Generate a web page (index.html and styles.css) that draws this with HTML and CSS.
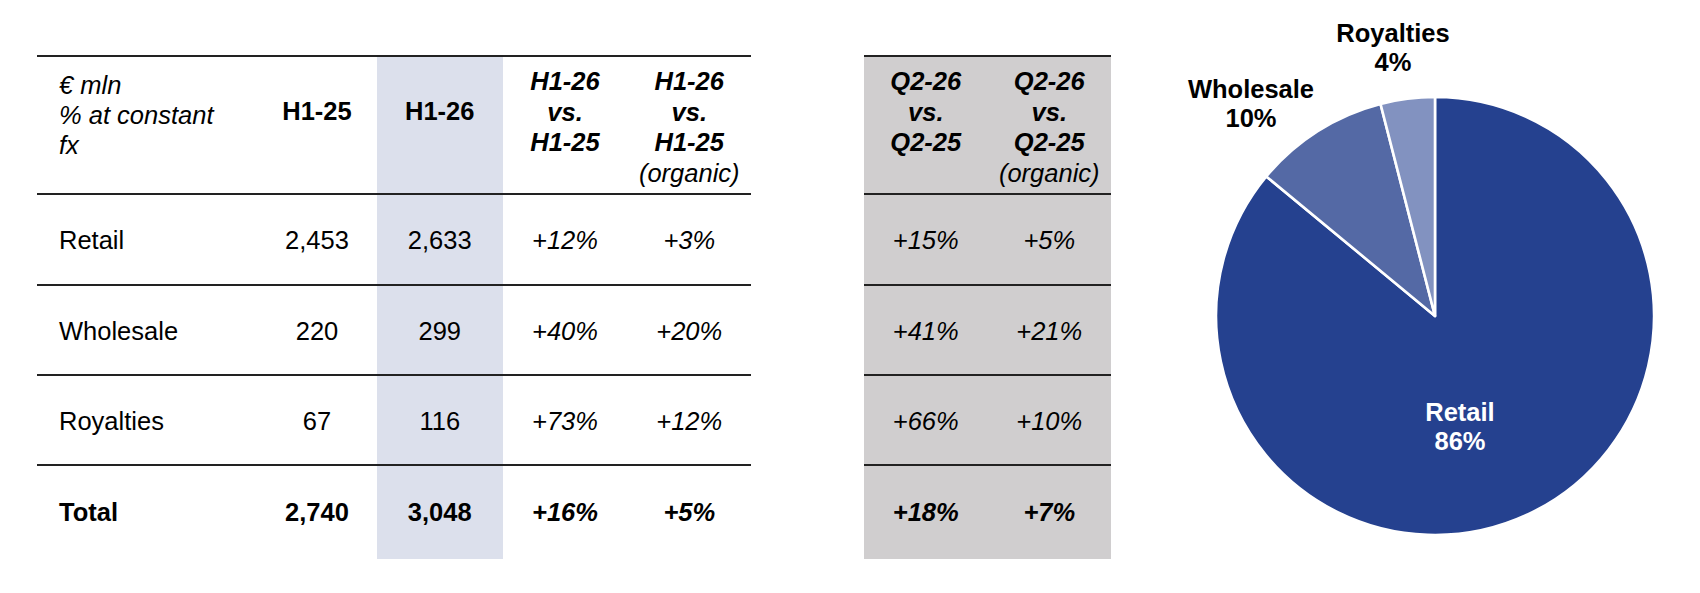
FILE: index.html
```html
<!DOCTYPE html>
<html lang="en">
<head>
<meta charset="utf-8">
<title>Revenue by channel</title>
<link rel="stylesheet" href="styles.css">
</head>
<body>
<div class="page">
  <div class="grid grid-main">
    <div class="cell hd hd-label">€ mln<br>% at constant<br>fx</div>
    <div class="cell hd hd-single">H1-25</div>
    <div class="cell hd hd-single shade">H1-26</div>
    <div class="cell hd hd-multi"><span class="bi">H1-26<br>vs.<br>H1-25</span></div>
    <div class="cell hd hd-multi"><span class="bi">H1-26<br>vs.<br>H1-25</span><br><span class="it">(organic)</span></div>

    <div class="cell row label">Retail</div>
    <div class="cell row num">2,453</div>
    <div class="cell row num shade">2,633</div>
    <div class="cell row num it">+12%</div>
    <div class="cell row num it">+3%</div>

    <div class="cell row label">Wholesale</div>
    <div class="cell row num">220</div>
    <div class="cell row num shade">299</div>
    <div class="cell row num it">+40%</div>
    <div class="cell row num it">+20%</div>

    <div class="cell row label">Royalties</div>
    <div class="cell row num">67</div>
    <div class="cell row num shade">116</div>
    <div class="cell row num it">+73%</div>
    <div class="cell row num it">+12%</div>

    <div class="cell total label">Total</div>
    <div class="cell total num">2,740</div>
    <div class="cell total num shade">3,048</div>
    <div class="cell total num it">+16%</div>
    <div class="cell total num it">+5%</div>
  </div>

  <div class="grid grid-q">
    <div class="cell hd hd-multi"><span class="bi">Q2-26<br>vs.<br>Q2-25</span></div>
    <div class="cell hd hd-multi"><span class="bi">Q2-26<br>vs.<br>Q2-25</span><br><span class="it">(organic)</span></div>

    <div class="cell row num it">+15%</div>
    <div class="cell row num it">+5%</div>

    <div class="cell row num it">+41%</div>
    <div class="cell row num it">+21%</div>

    <div class="cell row num it">+66%</div>
    <div class="cell row num it">+10%</div>

    <div class="cell total num it">+18%</div>
    <div class="cell total num it">+7%</div>
  </div>

  <div class="chart">
    <svg class="pie" width="438" height="438" viewBox="0 0 438 438" aria-hidden="true">
      <path class="sl-retail" d="M219,219 L219,0 A219,219 0 1 1 50.3,79.4 Z"/>
      <path class="sl-wholesale" d="M219,219 L50.3,79.4 A219,219 0 0 1 164.5,6.9 Z"/>
      <path class="sl-royalties" d="M219,219 L164.5,6.9 A219,219 0 0 1 219,0 Z"/>
    </svg>
    <div class="plabel pl-royalties">Royalties<br>4%</div>
    <div class="plabel pl-wholesale">Wholesale<br>10%</div>
    <div class="plabel pl-retail">Retail<br>86%</div>
  </div>
</div>
</body>
</html>
```

FILE: styles.css
```css
html, body {
  margin: 0;
  padding: 0;
  background: #ffffff;
}

body {
  width: 1700px;
  height: 593px;
  overflow: hidden;
  font-family: "Liberation Sans", Arial, sans-serif;
  font-size: 25.5px;
  color: #000000;
}

.page {
  display: flex;
  align-items: flex-start;
  padding-left: 37px;
}

.grid {
  display: grid;
  margin-top: 55px;
  grid-template-rows: 138px 91px 90px 90px 95px;
}

.grid-main {
  width: 714px;
  grid-template-columns: 220px 120px 125.5px 125px 123.5px;
}

.grid-q {
  width: 247px;
  margin-left: 113px;
  grid-template-columns: 123.5px 123.5px;
  background: #d0cecf;
}

.cell {
  box-sizing: border-box;
  border-top: 2px solid #222222;
  display: flex;
  justify-content: center;
  text-align: center;
}

.shade {
  background: #dce0ec;
}

/* header cells: plain block flow so the line breaks stack */
.hd {
  display: block;
  line-height: 30.7px;
  white-space: nowrap;
}

.hd-label {
  text-align: left;
  font-style: italic;
  line-height: 30px;
  padding-top: 13px;
  padding-left: 22px;
}

.hd-single {
  font-weight: bold;
  padding-top: 39px;
}

.hd-multi {
  padding-top: 9px;
}

.bi {
  font-weight: bold;
  font-style: italic;
}

.it {
  font-style: italic;
}

/* body cells */
.row,
.total {
  align-items: center;
}

.row {
  padding-top: 2px;
}

.total {
  font-weight: bold;
}

.label {
  justify-content: flex-start;
  padding-left: 22px;
}

/* pie chart */
.chart {
  position: relative;
  box-sizing: border-box;
  width: 480px;
  height: 560px;
  margin-left: 69px;
  padding-top: 97px;
  padding-left: 36px;
}

.pie {
  display: block;
}

.pie path {
  stroke: #ffffff;
  stroke-width: 2.6;
  stroke-linejoin: round;
}

.sl-retail {
  fill: #25418f;
}

.sl-wholesale {
  fill: #5469a5;
}

.sl-royalties {
  fill: #8292c0;
}

.plabel {
  position: absolute;
  width: 180px;
  text-align: center;
  font-weight: bold;
  line-height: 29px;
}

.pl-royalties {
  left: 123px;
  top: 19px;
}

.pl-wholesale {
  left: -19px;
  top: 75px;
}

.pl-retail {
  left: 190px;
  top: 398px;
  color: #ffffff;
}
```
